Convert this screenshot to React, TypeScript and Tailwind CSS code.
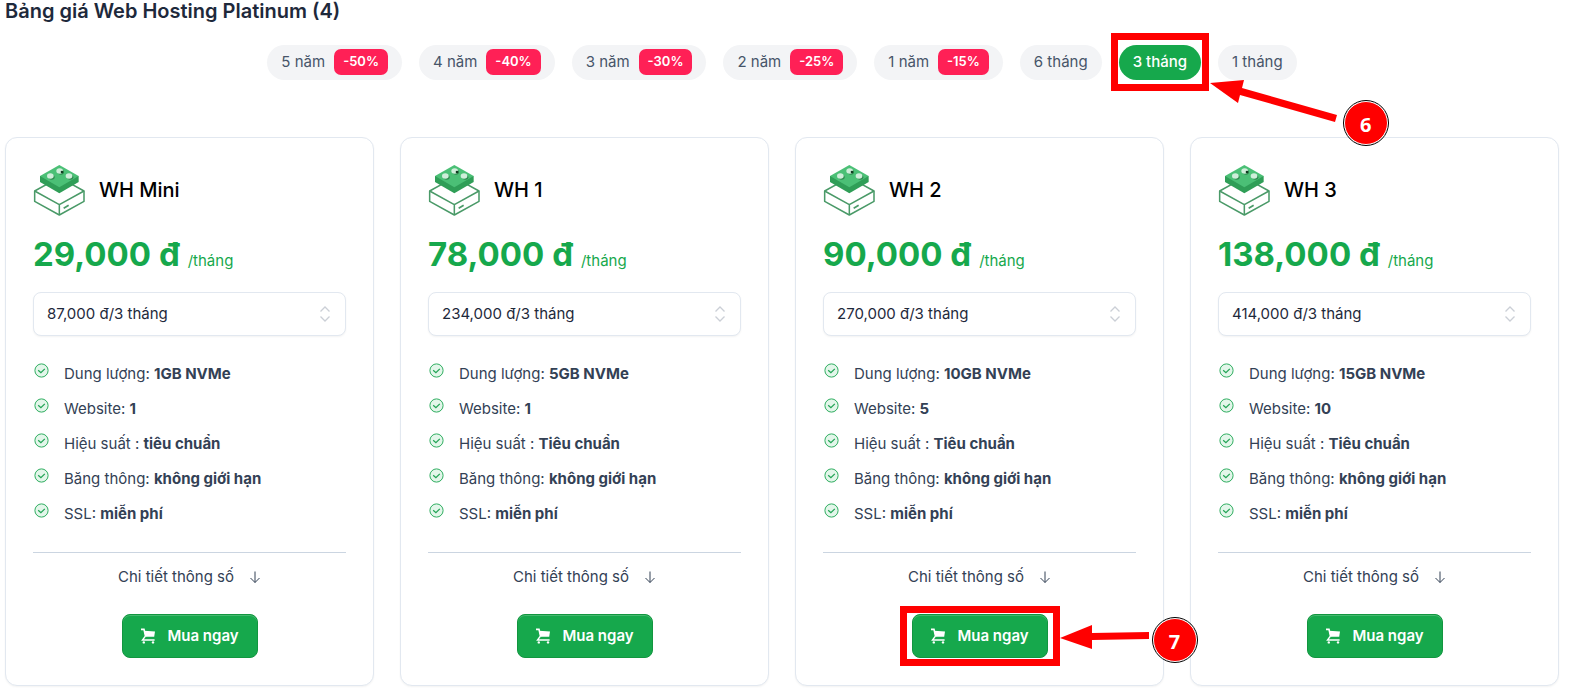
import React from "react";

type Period = { label: string; off?: string; active?: boolean };
type Plan = { name: string; price: string; total: string; specs: [string, string][] };

const periods: Period[] = [
  { label: "5 năm", off: "-50%" },
  { label: "4 năm", off: "-40%" },
  { label: "3 năm", off: "-30%" },
  { label: "2 năm", off: "-25%" },
  { label: "1 năm", off: "-15%" },
  { label: "6 tháng" },
  { label: "3 tháng", active: true },
  { label: "1 tháng" },
];

const specs = (disk: string, sites: string, speed = "Tiêu chuẩn"): [string, string][] => [
  ["Dung lượng:", disk],
  ["Website:", sites],
  ["Hiệu suất :", speed],
  ["Băng thông:", "không giới hạn"],
  ["SSL:", "miễn phí"],
];

const plans: Plan[] = [
  { name: "WH Mini", price: "29,000 đ", total: "87,000 đ/3 tháng", specs: specs("1GB NVMe", "1", "tiêu chuẩn") },
  { name: "WH 1", price: "78,000 đ", total: "234,000 đ/3 tháng", specs: specs("5GB NVMe", "1") },
  { name: "WH 2", price: "90,000 đ", total: "270,000 đ/3 tháng", specs: specs("10GB NVMe", "5") },
  { name: "WH 3", price: "138,000 đ", total: "414,000 đ/3 tháng", specs: specs("15GB NVMe", "10") },
];

function ServerIcon() {
  return (
    <svg viewBox="-2 0 156 156" className="size-13 shrink-0" aria-hidden="true">
      <g fill="#fff" stroke="#4a9a68" strokeWidth="4.6" strokeLinejoin="round">
        <path d="M77 40 L151 81 V112 L77 153 L3 112 V81 Z" />
        <path d="M3 81 L77 122 L151 81 M77 122 V153" fill="none" />
        <path d="M90 133 L105 124" strokeWidth="5" />
      </g>
      <path d="M19 36 V54 L77 88 L135 54 V36 Z" fill="#2f9e57" />
      <path d="M77 3 L135 36 L77 70 L19 36 Z" fill="#4bc076" />
      {[[51, 37], [79, 22], [107, 37]].map(([x, y]) => (
        <g key={x}>
          <ellipse cx={x + 3} cy={y + 3} rx="9" ry="7" fill="#2f8a50" />
          <ellipse cx={x - 1} cy={y - 1} rx="10" ry="8" fill="#cfeeda" />
        </g>
      ))}
      <ellipse cx="85" cy="24" rx="4" ry="4" fill="#123d22" />
    </svg>
  );
}

function CheckIcon() {
  return (
    <svg viewBox="0 0 16 16" className="-mt-[6px] size-4 shrink-0" aria-hidden="true">
      <circle cx="8.5" cy="7.5" r="6.6" fill="#e3f6ea" stroke="#2fae60" />
      <path d="M5.2 7.3 L7.9 9.7 L11.8 5.9" fill="none" stroke="#22a455" strokeWidth="1.3" />
    </svg>
  );
}

function CartIcon() {
  return (
    <svg viewBox="0 0 16 16" className="size-4" aria-hidden="true">
      <path d="M1 1.4 H4 L5.6 8.6" fill="none" stroke="#fff" strokeWidth="1.6" />
      <path d="M4.2 2.8 L15 3.4 L14.2 8.8 H5.4 Z" fill="#fff" />
      <path d="M5.2 8.4 L2.6 11.9 H14.6" fill="none" stroke="#fff" strokeWidth="1.5" />
      <circle cx="3.8" cy="14.4" r="1.2" fill="#fff" />
      <circle cx="13" cy="14.4" r="1.2" fill="#fff" />
    </svg>
  );
}

function StepBadge({ n, className }: { n: number; className: string }) {
  return (
    <span
      className={
        "absolute z-20 flex size-11 items-center justify-center rounded-full border border-white bg-[#ff0000] pt-1 font-['Open_Sans',sans-serif] text-xl font-bold text-white outline outline-black " +
        className
      }
    >
      {n}
    </span>
  );
}

function PeriodPill({ label, off, active }: Period) {
  return (
    <div className="relative">
      <button
        type="button"
        aria-pressed={!!active}
        className={
          "flex h-[35px] items-center gap-[9px] rounded-full px-[14px] text-[15px] " +
          (active ? "bg-[#16a84c] font-medium text-white" : "bg-[#f3f4f6] text-[#475569]")
        }
      >
        {label}
        {off && (
          <span className="mb-px flex h-[26px] items-center rounded-[7px] bg-[#ff2056] px-[9px] text-[13px] font-semibold text-white">
            {off}
          </span>
        )}
      </button>
      {active && (
        <>
          <span className="pointer-events-none absolute -inset-x-2 -top-3 -bottom-[11px] z-20 border-[7px] border-[#ff0000]" />
          <svg viewBox="0 0 130 48" className="pointer-events-none absolute top-[35px] left-[91px] z-20 h-12 w-[130px]" aria-hidden="true">
            <path d="M0 3 L34 0 L32 8 L127 35 L125 42 L30 15 L28 23 Z" fill="#ff0000" />
          </svg>
          <StepBadge n={6} className="top-14 left-[225px]" />
        </>
      )}
    </div>
  );
}

function PlanCard({ plan, marked }: { plan: Plan; marked: boolean }) {
  const id = plan.name.replace(" ", "-");
  return (
    <article className="flex flex-col rounded-xl border border-[#e2e8f0] bg-white px-[27px] pt-[26px] pb-[27px] shadow-xs">
      <header className="flex items-center gap-[14px]">
        <ServerIcon />
        <h3 className="text-xl font-medium text-black">{plan.name}</h3>
      </header>
      <p className="mt-[17px] flex items-baseline gap-2 text-[#16a84c]">
        <strong className="text-[33px] leading-[42px] font-bold">{plan.price}</strong>
        <span className="text-[15px]">/tháng</span>
      </p>
      <div className="relative mt-[17px]">
        <select
          id={id}
          aria-label={"Chu kỳ thanh toán " + plan.name}
          className="h-11 w-full appearance-none rounded-lg border border-[#e2e8f0] bg-white px-[13px] text-[15px] text-[#1e293b] shadow-xs"
        >
          <option>{plan.total}</option>
        </select>
        <svg viewBox="0 0 12 16" className="pointer-events-none absolute top-[14px] right-[15px] h-4 w-3" aria-hidden="true">
          <path d="M1.5 5.5 L6 1 L10.5 5.5 M1.5 10.5 L6 15 L10.5 10.5" fill="none" stroke="#cbcfd6" strokeWidth="1.3" />
        </svg>
      </div>
      <ul className="mt-[26px] flex flex-col gap-[11px] text-[15px] leading-6 text-[#334155]">
        {plan.specs.map(([k, v]) => (
          <li key={k} className="flex items-center gap-[15px]">
            <CheckIcon />
            <span>
              {k} <strong className="font-bold">{v}</strong>
            </span>
          </li>
        ))}
      </ul>
      <hr className="mt-[26px] border-[#cbd5e1]" />
      <button type="button" className="mt-3 flex items-center justify-center gap-[15px] self-center text-[15px] leading-6 text-[#334155]">
        Chi tiết thông số
        <svg viewBox="0 0 12 14" className="h-[14px] w-3" aria-hidden="true">
          <path d="M6 1.5 V12.5 M1.5 8 L6 12.5 L10.5 8" fill="none" stroke="#334155" />
        </svg>
      </button>
      <div className="relative mt-[25px] self-center">
        <button
          type="button"
          className="flex h-11 w-[136px] items-center justify-center gap-[11px] rounded-lg border border-[#12963f] bg-[#16a84c] text-[15px] font-semibold text-white inset-shadow-[0_1px_0_#45b970]"
        >
          <CartIcon />
          Mua ngay
        </button>
        {marked && (
          <>
            <span className="pointer-events-none absolute -inset-x-3 -inset-y-2 z-20 border-[7px] border-[#ff0000]" />
            <svg viewBox="0 0 90 26" className="pointer-events-none absolute top-[11px] left-[148px] z-20 h-[26px] w-[90px]" aria-hidden="true">
              <path d="M0 13 L32 0 V8 L89 7 V14 L32 15 V24 Z" fill="#ff0000" />
            </svg>
            <StepBadge n={7} className="top-1 left-[241px]" />
          </>
        )}
      </div>
    </article>
  );
}

export default function App() {
  return (
    <main className="overflow-x-hidden bg-white pr-[10px] pb-[9px] pl-[5px] font-['Inter','Noto_Sans',sans-serif]">
      <h2 className="text-xl leading-[22px] font-semibold text-[#1e293b]">Bảng giá Web Hosting Platinum (4)</h2>
      <div className="mt-[23px] flex flex-wrap justify-center gap-[17px]">
        {periods.map((p) => (
          <PeriodPill key={p.label} {...p} />
        ))}
      </div>
      <div className="mt-[57px] grid grid-cols-1 gap-[26px] sm:grid-cols-2 lg:grid-cols-4">
        {plans.map((p, i) => (
          <PlanCard key={p.name} plan={p} marked={i === 2} />
        ))}
      </div>
    </main>
  );
}
